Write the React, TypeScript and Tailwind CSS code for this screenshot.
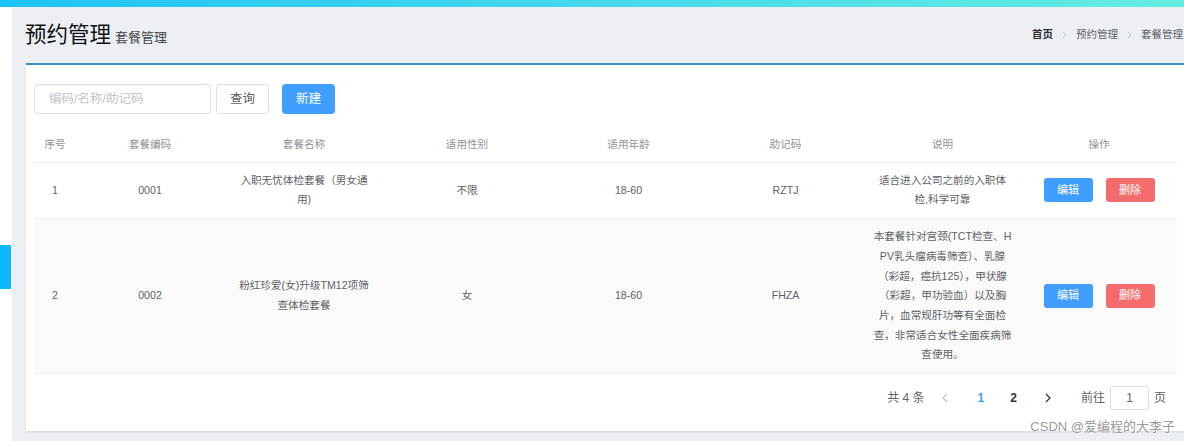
import React from 'react';

type Row = {
  idx: number;
  code: string;
  name: string[];
  sex: string;
  age: string;
  helpCode: string;
  remark: string[];
};

const rows: Row[] = [
  {
    idx: 1,
    code: '0001',
    name: ['入职无忧体检套餐（男女通', '用)'],
    sex: '不限',
    age: '18-60',
    helpCode: 'RZTJ',
    remark: ['适合进入公司之前的入职体', '检,科学可靠'],
  },
  {
    idx: 2,
    code: '0002',
    name: ['粉红珍爱(女)升级TM12项筛', '查体检套餐'],
    sex: '女',
    age: '18-60',
    helpCode: 'FHZA',
    remark: [
      '本套餐针对宫颈(TCT检查、H',
      'PV乳头瘤病毒筛查）、乳腺',
      '（彩超，癌抗125），甲状腺',
      '（彩超，甲功验血）以及胸',
      '片，血常规肝功等有全面检',
      '查，非常适合女性全面疾病筛',
      '查使用。',
    ],
  },
];

const headers = ['序号', '套餐编码', '套餐名称', '适用性别', '适用年龄', '助记码', '说明', '操作'];
const widths = ['w-[42px]', 'w-[148px]', 'w-[160px]', 'w-[166px]', 'w-[157px]', 'w-[157px]', 'w-[157px]', 'w-[156px]'];

function Lines({ lines }: { lines: string[] }) {
  return (
    <>
      {lines.map((l, i) => (
        <div key={i} className="whitespace-nowrap">
          {l}
        </div>
      ))}
    </>
  );
}

function Chevron({ dir, className }: { dir: 'left' | 'right'; className: string }) {
  return (
    <svg viewBox="0 0 6 10" className={className} fill="none" stroke="currentColor" strokeWidth="1.2">
      {dir === 'right' ? <path d="M1 1l4 4-4 4" /> : <path d="M5 1L1 5l4 4" />}
    </svg>
  );
}

export default function App() {
  return (
    <div
      className="relative h-[441px] w-[1184px] overflow-hidden bg-white"
      style={{ fontFamily: '"Liberation Sans", "Noto Sans CJK SC", sans-serif' }}
    >
      {/* top gradient strip */}
      <div className="h-[7px] w-full bg-gradient-to-r from-[#1cc3f5] to-[#63ede0]" />

      <div className="flex">
        {/* left sidebar sliver */}
        <div className="relative w-[12px] shrink-0 bg-white">
          <div className="absolute top-[238px] left-0 h-[44px] w-[11px] bg-[#0cb9fb]" />
        </div>

        <div className="h-[434px] flex-1 bg-[#ecf0f5] pl-[14px]">
          {/* page header */}
          <div className="flex h-[56px] items-center justify-between pr-[2px]">
            <div className="flex items-end gap-[4px]">
              <span className="-ml-[1px] text-[21.5px] leading-[28px] text-[#111]">预约管理</span>
              <span className="pb-[2px] text-[13px] leading-[18px] text-[#444]">套餐管理</span>
            </div>
            <div className="flex items-center text-[10.5px] text-[#606266]">
              <span className="font-bold text-[#303133]">首页</span>
              <Chevron dir="right" className="mx-[9px] h-[8px] w-[5px] text-[#c0c4cc]" />
              <span>预约管理</span>
              <Chevron dir="right" className="mx-[9px] h-[8px] w-[5px] text-[#c0c4cc]" />
              <span>套餐管理</span>
            </div>
          </div>

          {/* panel */}
          <div className="h-[368px] w-[1159px] border-t-[2px] border-[#3c8dbc] bg-white px-[8px] shadow-[0_1px_2px_rgba(0,0,0,0.1)]">
            <div className="flex items-center pt-[19px]">
              <div className="flex h-[30px] w-[177px] items-center rounded-[4px] border border-[#dcdfe6] pl-[14px] text-[12.5px] text-[#c0c4cc]">
                编码/名称/助记码
              </div>
              <button className="ml-[5px] h-[30px] w-[53px] rounded-[4px] border border-[#dcdfe6] bg-white text-[12.5px] text-[#606266]">
                查询
              </button>
              <button className="ml-[13px] h-[30px] w-[53px] rounded-[4px] bg-[#409eff] text-[12.5px] text-white">
                新建
              </button>
            </div>

            <table className="mt-[14px] w-[1143px] table-fixed border-collapse text-[10.6px] leading-[19.7px] text-[#606266]">
              <colgroup>
                {widths.map((w, i) => (
                  <col key={i} className={w} />
                ))}
              </colgroup>
              <thead>
                <tr className="border-b border-[#ebeef5]">
                  {headers.map((h) => (
                    <th key={h} className="py-[7px] text-center font-normal whitespace-nowrap text-[#909399]">
                      {h}
                    </th>
                  ))}
                </tr>
              </thead>
              <tbody>
                {rows.map((r) => (
                  <tr key={r.idx} className={`border-b border-[#ebeef5] ${r.idx % 2 === 0 ? 'bg-[#fafafa]' : 'bg-white'}`}>
                    <td className="py-[8px] text-center">{r.idx}</td>
                    <td className="text-center">{r.code}</td>
                    <td className="text-center">
                      <Lines lines={r.name} />
                    </td>
                    <td className="text-center">{r.sex}</td>
                    <td className="text-center">{r.age}</td>
                    <td className="text-center">{r.helpCode}</td>
                    <td className="py-[8px] text-center">
                      <Lines lines={r.remark} />
                    </td>
                    <td className="text-center">
                      <div className="flex justify-center gap-[13px]">
                        <button className="h-[24px] w-[49px] rounded-[3px] bg-[#409eff] text-[11px] text-white">编辑</button>
                        <button className="h-[24px] w-[49px] rounded-[3px] bg-[#f56c6c] text-[11px] text-white">删除</button>
                      </div>
                    </td>
                  </tr>
                ))}
              </tbody>
            </table>

            {/* pagination */}
            <div className="mt-[12px] flex items-center justify-end pr-[11px] text-[12px] text-[#606266]">
              <span className="mr-[17px]">共 4 条</span>
              <Chevron dir="left" className="mr-[30px] h-[10px] w-[6px] text-[#c0c4cc]" />
              <span className="mr-[26px] font-bold text-[#409eff]">1</span>
              <span className="mr-[28px] font-bold text-[#303133]">2</span>
              <Chevron dir="right" className="mr-[30px] h-[10px] w-[6px] text-[#303133]" />
              <span>前往</span>
              <div className="mx-[5px] flex h-[24px] w-[39px] items-center justify-center rounded-[3px] border border-[#dcdfe6] text-[#606266]">
                1
              </div>
              <span>页</span>
            </div>
          </div>
        </div>
      </div>

      {/* watermark */}
      <div className="absolute right-[9px] bottom-[5px] text-[13px] text-[#9a9a9a] [text-shadow:0_0_2px_#fff]">
        CSDN @爱编程的大李子
      </div>
    </div>
  );
}
